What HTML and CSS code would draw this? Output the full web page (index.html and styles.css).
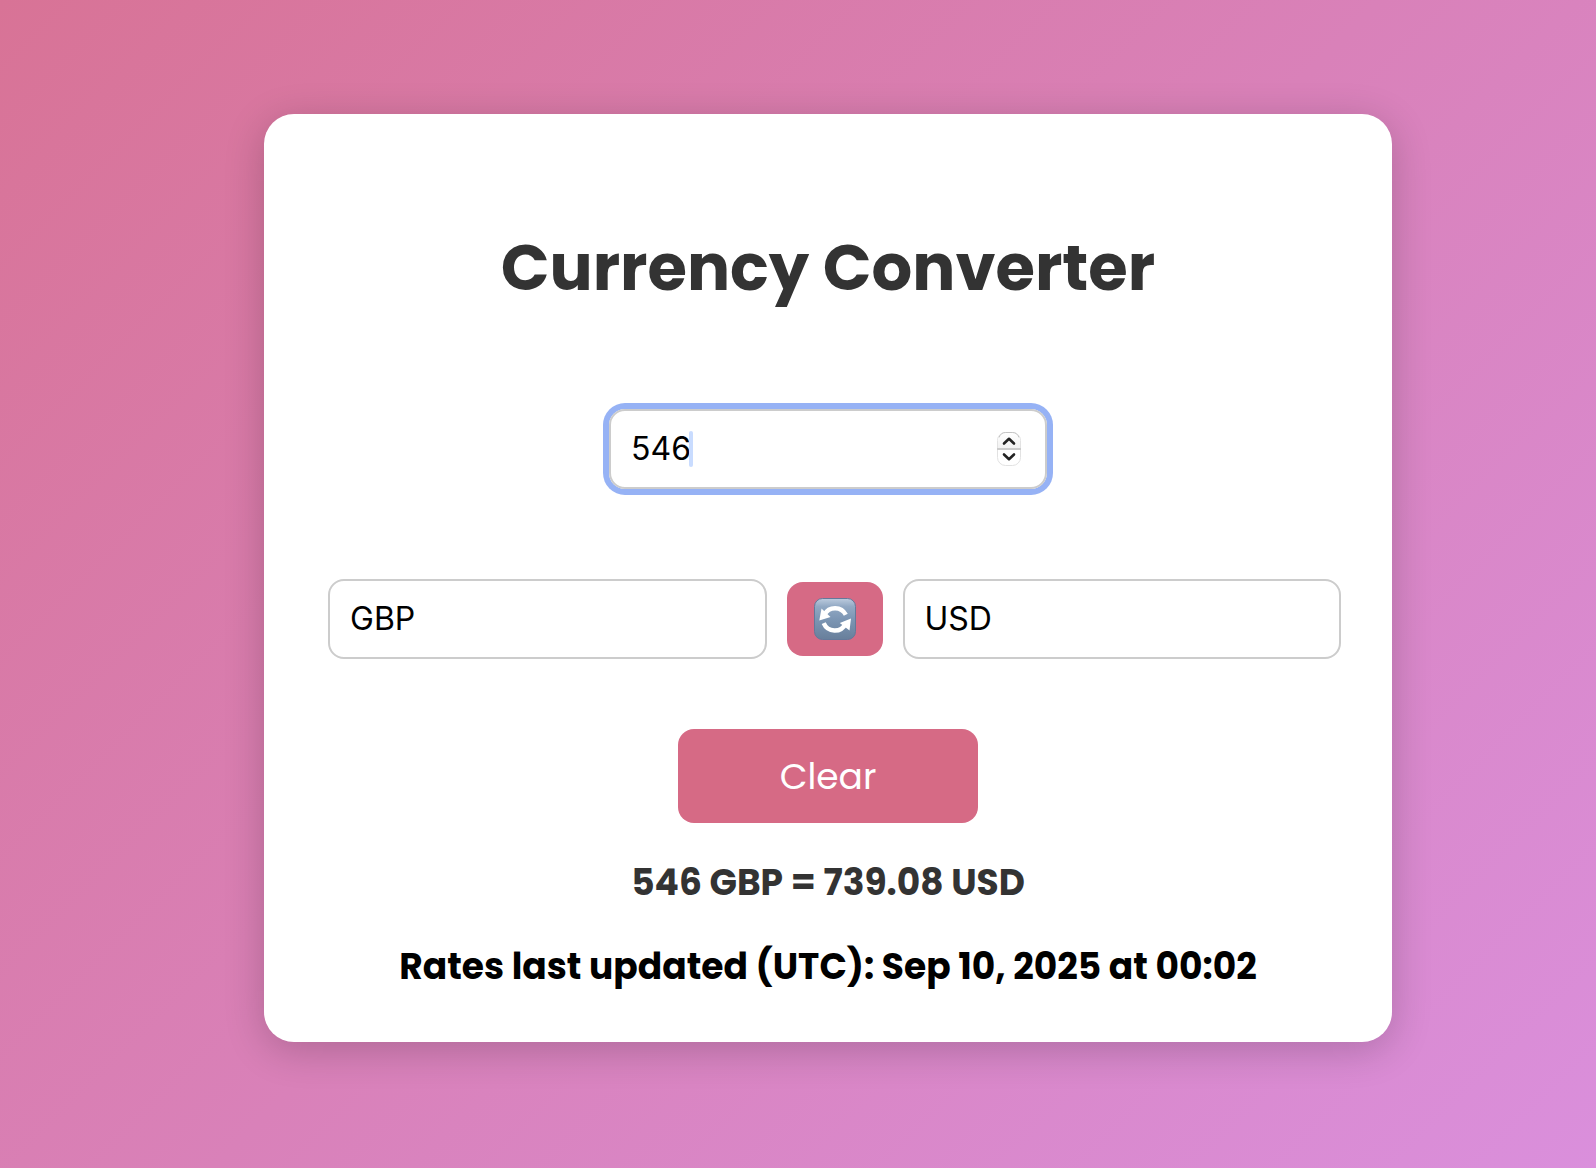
FILE: index.html
```html
<!DOCTYPE html>
<html lang="en">
<head>
  <meta charset="utf-8">
  <meta name="viewport" content="width=device-width, initial-scale=1">
  <title>Currency Converter</title>
  <link rel="stylesheet" href="styles.css">
</head>
<body class="page">
  <main class="card">
    <h1 class="title">Currency Converter</h1>

    <div class="amount">
      <input class="amount-input" id="amount" type="number" value="546" aria-label="Amount">
      <span class="caret" aria-hidden="true"></span>
      <svg class="stepper" viewBox="0 0 26 36" aria-hidden="true">
        <defs>
          <linearGradient id="half" x1="0" y1="0" x2="0" y2="1">
            <stop offset="0" stop-color="#fff"/>
            <stop offset="1" stop-color="#f1f1f1"/>
          </linearGradient>
        </defs>
        <rect x="1.5" y="1.5" width="23" height="33" rx="8" fill="#fff" stroke="#e2e2e2"/>
        <path d="M2 17V9.500a7.500 7.500 0 0 1 7.500-7.500h7a7.500 7.500 0 0 1 7.500 7.500V17z" fill="url(#half)"/>
        <path d="M3 6.500Q5 1.500 9.500 1.500h7Q21 1.500 23 6.500" fill="none" stroke="#c4c4c4"/>
        <path d="M1 18h24" stroke="#cbcbcb" stroke-width="2"/>
        <path d="M8 12.500l5-4.700 5 4.700M8 23.500l5 4.700 5-4.700" fill="none" stroke="#222" stroke-width="2.600" stroke-linecap="round" stroke-linejoin="round"/>
      </svg>
    </div>

    <div class="currencies">
      <select class="field" aria-label="From currency">
        <option>GBP</option>
        <option>USD</option>
      </select>
      <button class="button swap" type="button" aria-label="Swap currencies">
        <svg class="swap-icon" viewBox="0 0 42 42" aria-hidden="true">
          <defs>
            <linearGradient id="tile" x1="0" y1="0" x2="0" y2="1">
              <stop offset="0" stop-color="#bccbde"/>
              <stop offset=".2" stop-color="#91a8c3"/>
              <stop offset=".5" stop-color="#7c96b4"/>
              <stop offset="1" stop-color="#687f9b"/>
            </linearGradient>
          </defs>
          <rect x=".5" y=".5" width="41" height="41" rx="8" fill="url(#tile)" stroke="#64799a"/>
          <g fill="none" stroke="#fff" stroke-width="4.400">
            <path d="M31.800 16.800A12 12 0 0 0 10.500 16.500"/>
            <path d="M9.700 25.200A12 12 0 0 0 31.500 25.900"/>
          </g>
          <path d="M7.500 10.500L5.300 22.500 16.500 19z" fill="#fff"/>
          <path d="M37 20.500L25.800 25 35.500 32.500z" fill="#fff"/>
        </svg>
      </button>
      <select class="field" aria-label="To currency">
        <option>USD</option>
        <option>GBP</option>
      </select>
    </div>

    <button class="button clear" type="button">Clear</button>

    <p class="result">546 GBP = 739.08 USD</p>
    <p class="updated">Rates last updated (UTC): Sep 10, 2025 at 00:02</p>
  </main>
</body>
</html>
```
FILE: styles.css
```css
* {
  box-sizing: border-box;
}

.page {
  display: flex;
  align-items: center;
  justify-content: center;
  min-height: 100vh;
  margin: 0;
  padding: 0 0 12px 60px;
  background: linear-gradient(135deg, #d87396, #da8fdc);
  font-family: Poppins, Inter, "Liberation Sans", sans-serif;
}

.card {
  display: flex;
  flex-direction: column;
  align-items: center;
  width: 100%;
  max-width: 1128px;
  padding: 106px 51px 47px 64px;
  border-radius: 30px;
  background: #fff;
  box-shadow: 0 8px 40px rgba(0, 0, 0, 0.2);
}

.title,
.amount,
.clear,
.result,
.updated {
  margin: 0 13px 0 0;
}

.title {
  color: #333;
  font-size: 64px;
  font-weight: 700;
  line-height: 96px;
  text-align: center;
}

.amount {
  position: relative;
  display: flex;
  align-items: center;
  width: 438px;
  max-width: 100%;
  height: 80px;
  margin-top: 93px;
  padding: 0 23px 0 20px;
  border: 2px solid #ccc;
  border-radius: 16px;
  box-shadow: 0 0 0 6px #96b2f5;
}

.amount-input {
  flex: 1;
  min-width: 0;
  padding: 0;
  border: 0;
  outline: 0;
  background: transparent;
  color: #000;
  font: 400 32px/40px Inter, "Liberation Sans", sans-serif;
  appearance: textfield;
}

.amount-input::-webkit-inner-spin-button {
  display: none;
}

.caret {
  position: absolute;
  top: 20px;
  left: 78px;
  width: 4px;
  height: 36px;
  border-radius: 2px;
  background: #c9dcff;
}

.stepper {
  width: 26px;
  height: 36px;
}

.currencies {
  display: flex;
  align-items: center;
  gap: 20px;
  width: 100%;
  margin-top: 90px;
}

.field {
  flex: 1;
  min-width: 0;
  height: 80px;
  padding: 0 20px;
  border: 2px solid #ccc;
  border-radius: 16px;
  background: #fff;
  color: #000;
  font: 400 32px/40px Inter, "Liberation Sans", sans-serif;
  appearance: none;
}

.button {
  border: 0;
  border-radius: 16px;
  background: #d66a85;
  color: #fff;
  font-family: inherit;
  cursor: pointer;
}

.swap {
  display: flex;
  align-items: center;
  justify-content: center;
  width: 96px;
  height: 74px;
  padding: 0;
}

.swap-icon {
  width: 42px;
  height: 42px;
}

.clear {
  width: 300px;
  height: 94px;
  margin-top: 70px;
  font-size: 36px;
}

.result,
.updated {
  font-size: 36px;
  font-weight: 700;
  line-height: 56px;
  text-align: center;
}

.result {
  margin-top: 32px;
  color: #333;
}

.updated {
  margin-top: 28px;
  color: #000;
}
```
